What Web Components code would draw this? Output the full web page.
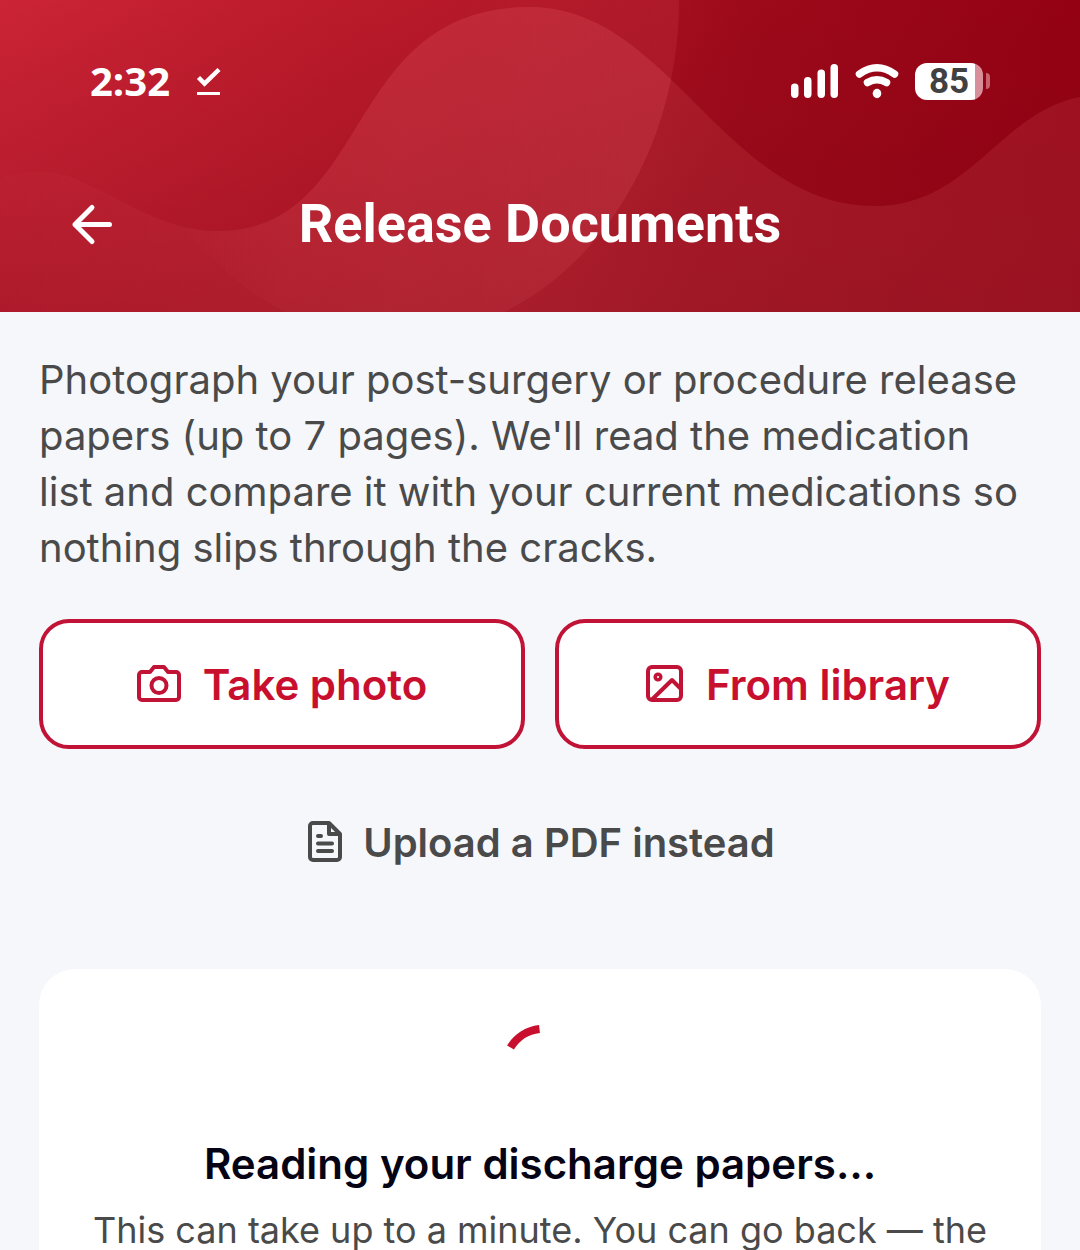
<!DOCTYPE html>
<html lang="en">
<head>
<meta charset="utf-8">
<meta name="viewport" content="width=device-width, initial-scale=1">
<title>Release Documents</title>
<style>
    body {
        margin: 0;
        background: #f5f7fb;
        color: #4a4a4a;
        font-family: Inter, "Open Sans", sans-serif;
    }
</style>
</head>
<body>
<release-page></release-page>

<script>
"use strict";

const define = (name, html) => {
    const template = document.createElement("template");
    template.innerHTML = html;

    customElements.define(name, class extends HTMLElement {
        constructor() {
            super();
            this.attachShadow({mode: "open"});
            this.shadowRoot.appendChild(template.content.cloneNode(true));
        }
    });
};

define("status-bar", `
    <style>
        :host {
            align-items: center;
            color: #fff;
            display: flex;
            justify-content: space-between;
            padding: 56px 90px 0;
        }
        .group {
            align-items: center;
            display: flex;
            height: 50px;
        }
        .left {
            gap: 26px;
        }
        .right {
            gap: 15px;
        }
        time {
            font-family: "Open Sans", sans-serif;
            font-size: 40px;
            font-weight: 700;
            line-height: 48px;
        }
        svg {
            display: block;
        }
        .battery {
            align-items: center;
            display: flex;
            gap: 3px;
        }
        .level {
            background: linear-gradient(to right, #fff 60px, #d98f9a 60px);
            border-radius: 12px;
            box-sizing: border-box;
            color: #414141;
            font-family: Roboto, sans-serif;
            font-size: 35px;
            font-weight: 700;
            height: 37px;
            line-height: 38px;
            text-align: center;
            width: 68px;
        }
        .tip {
            background: #c9626f;
            border-radius: 0 4px 4px 0;
            height: 16px;
            width: 4px;
        }
    </style>
    <div class="group left">
        <time>2:32</time>
        <svg width="26" height="30" viewBox="0 0 26 30" fill="none" stroke="#fff" aria-hidden="true">
            <path d="M2.500 11.500l6 6L23 3.500" stroke-width="4.500"/>
            <path d="M1 27.500h23" stroke-width="3"/>
        </svg>
    </div>
    <div class="group right">
        <svg width="49" height="36" viewBox="0 0 49 36" fill="#fff" aria-hidden="true">
            <rect x="1" y="20.500" width="7.500" height="14.500" rx="3.700"/>
            <rect x="14" y="14" width="7.500" height="21" rx="3.700"/>
            <rect x="27.500" y="6.500" width="7.500" height="28.500" rx="3.700"/>
            <rect x="40.500" y="1" width="7.500" height="34" rx="3.700"/>
        </svg>
        <svg width="46" height="36" viewBox="0 0 46 36" fill="none" stroke="#fff" stroke-linecap="round" aria-hidden="true">
            <path d="M5.500 11Q23 -1.500 40.500 11" stroke-width="7.500"/>
            <path d="M13.500 19.500Q23 14 32.500 19.500" stroke-width="7.500"/>
            <ellipse cx="23" cy="30.500" rx="4.300" ry="4.700" fill="#fff" stroke="none"/>
        </svg>
        <div class="battery">
            <div class="level">85</div>
            <div class="tip"></div>
        </div>
    </div>
`);

define("page-header", `
    <style>
        :host {
            background: linear-gradient(100deg, #cb2436 0%, #bd1c2c 26%, #b01525 48%, #9d0a1a 66%, #920012 100%);
            color: #fff;
            display: block;
            overflow: hidden;
            position: relative;
        }
        /* waves lie behind the bar and the title */
        .art {
            height: 100%;
            inset: 0;
            position: absolute;
            width: 100%;
        }
        .content {
            position: relative;
        }
        .bar {
            align-items: center;
            display: grid;
            grid-template-columns: 56px 1fr 56px;
            padding: 86px 64px 56px;
        }
        button {
            background: none;
            border: 0;
            display: block;
            height: 56px;
            padding: 0;
            width: 56px;
        }
        svg {
            display: block;
        }
        h1 {
            font-family: Roboto, sans-serif;
            font-size: 54px;
            font-weight: 700;
            line-height: 64px;
            margin: 0;
            text-align: center;
        }
    </style>
    <svg class="art" viewBox="0 0 1080 312" preserveAspectRatio="none" aria-hidden="true">
        <defs>
            <linearGradient id="shade" x1="0" y1="0" x2="0" y2="1">
                <stop offset="0" stop-color="#800818" stop-opacity="0"/>
                <stop offset="1" stop-color="#800818" stop-opacity=".38"/>
            </linearGradient>
            <linearGradient id="disc-top" gradientUnits="userSpaceOnUse" x1="330" y1="0" x2="679" y2="0">
                <stop offset="0" stop-color="#ff7080" stop-opacity="0"/>
                <stop offset=".4" stop-color="#ff7080" stop-opacity=".02"/>
                <stop offset="1" stop-color="#ff7080" stop-opacity=".12"/>
            </linearGradient>
            <linearGradient id="disc-low" gradientUnits="userSpaceOnUse" x1="160" y1="0" x2="290" y2="0">
                <stop offset="0" stop-color="#ff7080" stop-opacity="0"/>
                <stop offset="1" stop-color="#ff7080" stop-opacity=".05"/>
            </linearGradient>
            <linearGradient id="wave" gradientUnits="userSpaceOnUse" x1="0" y1="0" x2="400" y2="0">
                <stop offset="0" stop-color="#ff8080" stop-opacity=".02"/>
                <stop offset="1" stop-color="#ff8080" stop-opacity=".12"/>
            </linearGradient>
            <clipPath id="below">
                <path d="M0 178C25 171 50 168 78 180C126 201 165 231 217 231C375 231 340 7 530 7C670 7 725 206 875 206C970 206 1000 112 1080 97V312H0Z"/>
            </clipPath>
        </defs>
        <rect width="1080" height="312" fill="url(#shade)"/>
        <ellipse cx="395" cy="0" rx="284" ry="338" fill="url(#disc-top)"/>
        <g clip-path="url(#below)">
            <rect width="1080" height="312" fill="url(#wave)"/>
            <ellipse cx="395" cy="0" rx="284" ry="338" fill="url(#disc-low)"/>
        </g>
    </svg>
    <div class="content">
        <status-bar></status-bar>
        <div class="bar">
            <button aria-label="Back">
                <svg width="56" height="56" viewBox="0 0 56 56" fill="none" stroke="#fff" stroke-width="5" stroke-linecap="round" stroke-linejoin="round" aria-hidden="true">
                    <path d="M45.500 28.500H11M28 11.500l-17 17 17 17"/>
                </svg>
            </button>
            <h1><slot></slot></h1>
        </div>
    </div>
`);

define("outline-button", `
    <style>
        :host {
            display: block;
        }
        button {
            align-items: center;
            background: #fff;
            border: 4px solid #c01336;
            border-radius: 30px;
            color: #c8102e;
            display: flex;
            font: inherit;
            font-size: 42px;
            font-weight: 600;
            gap: 20px;
            height: 130px;
            justify-content: center;
            padding: 0;
            width: 100%;
        }
    </style>
    <button><slot name="icon"></slot><span><slot></slot></span></button>
`);

define("text-button", `
    <style>
        :host {
            display: flex;
            justify-content: center;
        }
        button {
            align-items: center;
            background: none;
            border: 0;
            color: #4a4a4a;
            display: flex;
            font: inherit;
            font-size: 40px;
            font-weight: 600;
            gap: 20px;
            height: 130px;
            padding: 0;
        }
    </style>
    <button><slot name="icon"></slot><span><slot></slot></span></button>
`);

define("progress-card", `
    <style>
        :host {
            background: #fff;
            border-radius: 36px;
            display: block;
            padding: 52px 40px;
            text-align: center;
        }
        svg {
            display: block;
            margin: 0 auto 19px;
        }
        h2 {
            color: #050314;
            font-size: 42px;
            font-weight: 600;
            line-height: 56px;
            margin: 0 0 12px;
        }
        p {
            font-size: 36px;
            line-height: 52px;
            margin: 0;
        }
    </style>
    <svg width="96" height="96" viewBox="0 0 96 96" fill="none" stroke="#c8102e" stroke-width="8" role="img" aria-label="Loading">
        <path d="M18.500 26.500A39 39 0 0 1 47.500 8"/>
    </svg>
    <h2><slot name="title"></slot></h2>
    <p><slot></slot></p>
`);

define("release-page", `
    <style>
        :host {
            display: block;
        }
        main {
            padding: 40px 39px;
        }
        .intro {
            font-size: 40px;
            line-height: 56px;
            margin: 0 0 43px;
        }
        .actions {
            display: grid;
            gap: 30px;
            grid-template-columns: 1fr 1fr;
            margin-bottom: 28px;
        }
        text-button {
            margin-bottom: 62px;
        }
        svg {
            display: block;
            flex: none;
        }
    </style>
    <page-header>Release Documents</page-header>
    <main>
        <p class="intro">Photograph your post-surgery or procedure release<br>papers (up to 7 pages). We'll read the medication<br>list and compare it with your current medications so<br>nothing slips through the cracks.</p>
        <div class="actions">
            <outline-button>
                <svg slot="icon" width="46" height="44" viewBox="0 0 46 44" fill="none" stroke="#c01336" stroke-width="4" stroke-linejoin="round" aria-hidden="true">
                    <path d="M5 10h8l4-5h10l4 5h8a3 3 0 0 1 3 3v22a3 3 0 0 1-3 3H5a3 3 0 0 1-3-3V13a3 3 0 0 1 3-3z"/>
                    <circle cx="22" cy="23.500" r="7.500"/>
                </svg>
                Take photo
            </outline-button>
            <outline-button>
                <svg slot="icon" width="40" height="44" viewBox="0 0 40 44" fill="none" stroke="#c01336" stroke-width="4" stroke-linejoin="round" aria-hidden="true">
                    <rect x="2" y="5" width="33" height="33" rx="4"/>
                    <circle cx="12" cy="15" r="2.800" stroke-width="3.500"/>
                    <path d="M6 37.500L26 18l9 9"/>
                </svg>
                From library
            </outline-button>
        </div>
        <text-button>
            <svg slot="icon" width="38" height="44" viewBox="0 0 38 44" fill="none" stroke="#4a4a4a" stroke-width="4" stroke-linejoin="round" stroke-linecap="round" aria-hidden="true">
                <path d="M24 3H8a3 3 0 0 0-3 3v31a3 3 0 0 0 3 3h24a3 3 0 0 0 3-3V14zM24 3v11h11"/>
                <path d="M13 16h3M13 23.500h14M13 31h14"/>
            </svg>
            Upload a PDF instead
        </text-button>
        <progress-card>
            <span slot="title">Reading your discharge papers…</span>
            This can take up to a minute. You can go back — the
        </progress-card>
    </main>
`);
</script>
</body>
</html>
